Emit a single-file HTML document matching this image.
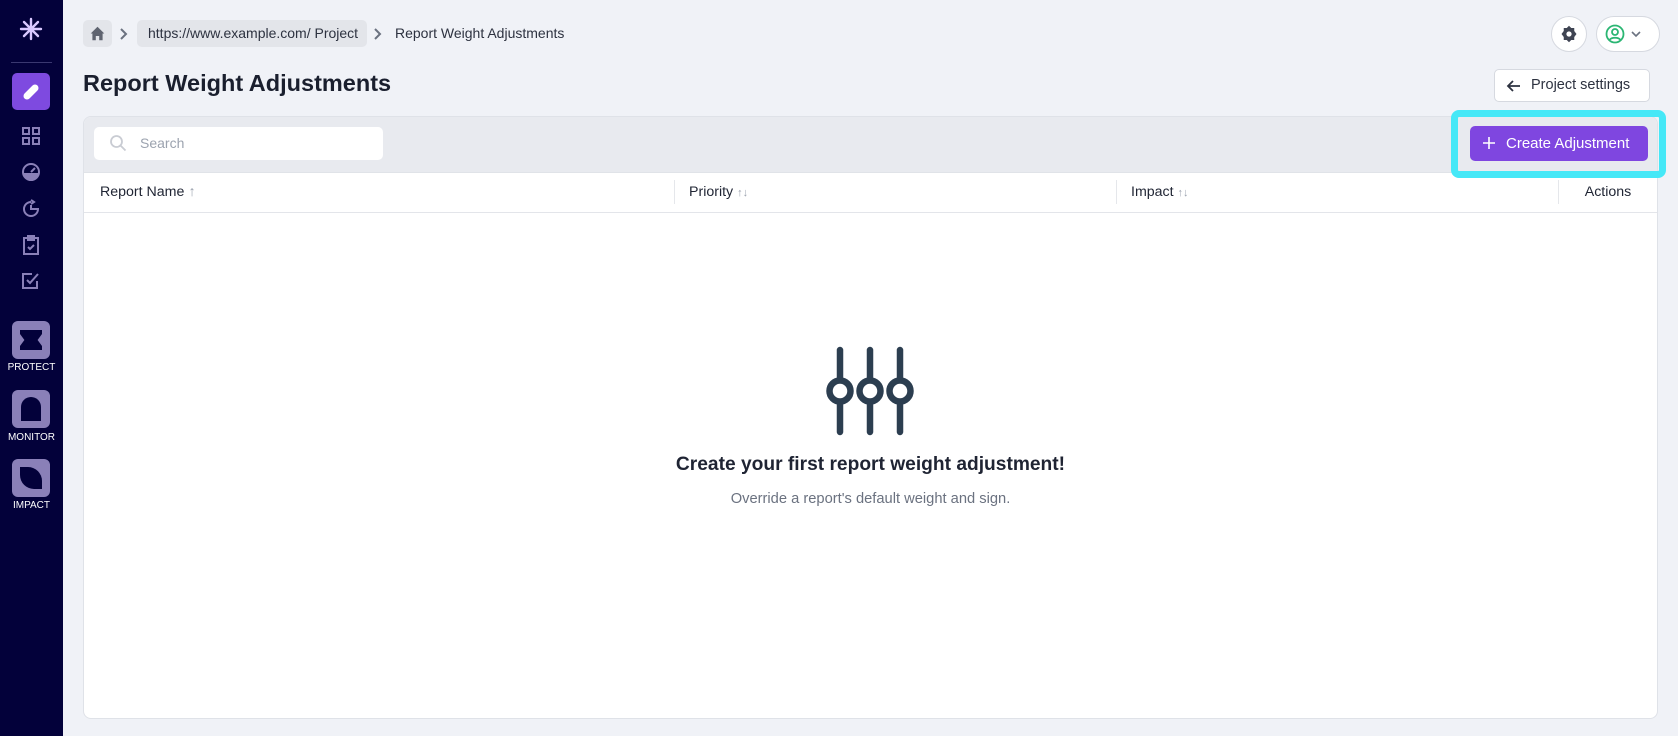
<!DOCTYPE html>
<html><head><meta charset="utf-8"><style>
*{box-sizing:border-box;margin:0;padding:0}
body{width:1678px;height:736px;background:#f0f2f7;font-family:"Liberation Sans",sans-serif;position:relative;overflow:hidden;color:#1f2433}
.abs{position:absolute}
.sb{left:0;top:0;width:63px;height:736px;background:#03013a}
.tile{left:12px;width:38px;height:38px;border-radius:6px;background:#8a80b8}
.lbl{left:0;width:63px;text-align:center;color:#fff;font-size:10px}
.hd{font-size:14.2px;color:#1f2433;top:172px;height:40px;line-height:40px}
.div{top:180px;width:1px;height:24px;background:#e5e7eb}
</style></head><body>
<div class="abs sb"></div>
<svg class="abs" style="left:19px;top:17px" width="24" height="24" viewBox="0 0 24 24" stroke="#d9c8ff" stroke-width="2.4" stroke-linecap="round"><path d="M12 2v20M2 12h20M5 5l14 14M19 5L5 19"/></svg>
<div class="abs" style="left:11px;top:62px;width:41px;height:1px;background:#3a3870"></div>
<div class="abs" style="left:12px;top:73px;width:38px;height:37px;border-radius:5px;background:#7e4ae0"></div>
<svg class="abs" style="left:19px;top:80px" width="24" height="24" viewBox="0 0 24 24"><path d="M8 16L16 8" stroke="#fff" stroke-width="7" stroke-linecap="round"/></svg>
<svg class="abs" style="left:21px;top:126px" width="20" height="20" viewBox="0 0 20 20" fill="none" stroke="#8a80b8" stroke-width="2"><rect x="2" y="2" width="6" height="6"/><rect x="12" y="2" width="6" height="6"/><rect x="2" y="12" width="6" height="6"/><rect x="12" y="12" width="6" height="6"/></svg>
<svg class="abs" style="left:21px;top:162px" width="20" height="20" viewBox="0 0 20 20"><circle cx="10" cy="10" r="8" fill="none" stroke="#8a80b8" stroke-width="2"/><path d="M2 11h16a8 8 0 0 1-16 0z" fill="#8a80b8"/><path d="M10 10l4-4" stroke="#8a80b8" stroke-width="2"/></svg>
<svg class="abs" style="left:21px;top:199px" width="20" height="20" viewBox="0 0 20 20" fill="none" stroke="#8a80b8" stroke-width="2"><path d="M10 3a7 7 0 1 0 7 7h-7V6"/><path d="M10 1l3 2-3 2"/></svg>
<svg class="abs" style="left:21px;top:235px" width="20" height="20" viewBox="0 0 20 20" fill="none" stroke="#8a80b8" stroke-width="2"><rect x="3" y="3" width="14" height="16"/><rect x="7" y="1" width="6" height="4" fill="#8a80b8"/><path d="M7 12l2 2 4-4"/></svg>
<svg class="abs" style="left:21px;top:270px" width="20" height="20" viewBox="0 0 20 20" fill="none" stroke="#8a80b8" stroke-width="2"><path d="M16 11v7H2V4h9"/><path d="M6 10l3 3 8-9"/></svg>
<div class="abs tile" style="top:321px"></div><div class="abs" style="left:20px;top:330px;width:22px;height:20px;background:#03013a;clip-path:polygon(0 0,100% 0,100% 20%,80% 50%,100% 80%,100% 100%,0 100%,0 80%,20% 50%,0 20%)"></div>
<div class="abs lbl" style="top:362px">PROTECT</div>
<div class="abs tile" style="top:390px"></div><div class="abs" style="left:21px;top:397px;width:20px;height:24px;background:#03013a;border-radius:10px 10px 0 0"></div>
<div class="abs lbl" style="top:432px">MONITOR</div>
<div class="abs tile" style="top:459px"></div><div class="abs" style="left:20px;top:467px;width:22px;height:22px;background:#03013a;border-radius:0 14px 0 14px"></div>
<div class="abs lbl" style="top:500px">IMPACT</div>

<div class="abs" style="left:83px;top:20px;width:29px;height:27px;border-radius:5px;background:#e3e5ea"></div>
<svg class="abs" style="left:89px;top:25px" width="17" height="17" viewBox="0 0 20 20"><path d="M10 2L2 10h2v8h4v-5h4v5h4v-8h2z" fill="#5f6470"/></svg>
<svg class="abs" style="left:118px;top:27px" width="12" height="14" viewBox="0 0 12 14" fill="none" stroke="#6b7280" stroke-width="2"><path d="M3 2l5 5-5 5"/></svg>
<div class="abs" style="left:137px;top:20px;width:230px;height:27px;border-radius:5px;background:#e3e5ea;font-size:14px;line-height:27px;padding-left:11px;color:#2d3240">https://www.example.com/ Project</div>
<svg class="abs" style="left:372px;top:27px" width="12" height="14" viewBox="0 0 12 14" fill="none" stroke="#6b7280" stroke-width="2"><path d="M3 2l5 5-5 5"/></svg>
<div class="abs" style="left:395px;top:20px;line-height:27px;font-size:14px;color:#2d3240">Report Weight Adjustments</div>
<div class="abs" style="left:83px;top:70px;font-size:23.5px;font-weight:bold;color:#1a1f2e">Report Weight Adjustments</div>

<div class="abs" style="left:1551px;top:16px;width:36px;height:36px;border-radius:50%;background:#fff;border:1px solid #d6d9e0"></div>
<svg class="abs" style="left:1560px;top:25px" width="18" height="18" viewBox="0 0 24 24"><path d="M12 1l3 3h4v4l3 4-3 4v4h-4l-3 3-3-3H5v-4l-3-4 3-4V4h4z" fill="#3f4452"/><circle cx="12" cy="12" r="3.5" fill="#fff"/></svg>
<div class="abs" style="left:1596px;top:16px;width:64px;height:36px;border-radius:18px;background:#fff;border:1px solid #d6d9e0"></div>
<svg class="abs" style="left:1605px;top:24px" width="20" height="20" viewBox="0 0 20 20" fill="none" stroke="#2bb673" stroke-width="1.8"><circle cx="10" cy="10" r="8.5"/><circle cx="10" cy="8" r="3"/><path d="M4.5 16c2-3 9-3 11 0"/></svg>
<svg class="abs" style="left:1630px;top:28px" width="12" height="12" viewBox="0 0 12 12" fill="none" stroke="#6b7280" stroke-width="1.6"><path d="M2 4l4 4 4-4"/></svg>

<div class="abs" style="left:1494px;top:69px;width:156px;height:33px;border-radius:5px;background:#fff;border:1px solid #d6d9e0;font-size:14.5px;line-height:31px;padding-left:36px;color:#2d3240">Project settings</div>
<svg class="abs" style="left:1506px;top:78px" width="16" height="16" viewBox="0 0 16 16" fill="none" stroke="#2d3240" stroke-width="1.8"><path d="M14 8H2M7 3L2 8l5 5"/></svg>

<div class="abs" style="left:83px;top:116px;width:1575px;height:603px;border-radius:8px;background:#fff;border:1px solid #dfe2e8;overflow:hidden">
<div style="height:56px;background:#e8eaef;border-bottom:1px solid #e0e3e8"></div>
<div style="height:40px;border-bottom:1px solid #e3e5ea"></div>
</div>
<div class="abs" style="left:94px;top:127px;width:289px;height:33px;border-radius:5px;background:#fff;font-size:14px;line-height:33px;padding-left:46px;color:#9ca3af">Search</div>
<svg class="abs" style="left:109px;top:134px" width="18" height="18" viewBox="0 0 18 18" fill="none" stroke="#c9ccd3" stroke-width="1.8"><circle cx="7.5" cy="7.5" r="5.5"/><path d="M11.5 11.5l5 5"/></svg>
<div class="abs" style="left:1451px;top:110px;width:215px;height:68px;border:7px solid #45e8f7;border-radius:8px"></div>
<div class="abs" style="left:1470px;top:126px;width:178px;height:35px;border-radius:5px;background:#7f46e0;color:#fff;font-size:15px;line-height:35px;padding-left:36px">Create Adjustment</div>
<svg class="abs" style="left:1482px;top:136px" width="14" height="14" viewBox="0 0 14 14" stroke="#fff" stroke-width="1.6"><path d="M7 1v12M1 7h12"/></svg>

<div class="abs hd" style="left:100px">Report Name <span style="color:#9ca3af">↑</span></div>
<div class="abs div" style="left:674px"></div>
<div class="abs hd" style="left:689px">Priority <span style="color:#9ca3af;font-size:11px">↑↓</span></div>
<div class="abs div" style="left:1116px"></div>
<div class="abs hd" style="left:1131px">Impact <span style="color:#9ca3af;font-size:11px">↑↓</span></div>
<div class="abs div" style="left:1558px"></div>
<div class="abs hd" style="left:1558px;width:100px;text-align:center">Actions</div>

<svg class="abs" style="left:820px;top:345px" width="100" height="95" viewBox="820 345 100 95" stroke="#2c3e50" stroke-width="6.5" stroke-linecap="round" fill="none">
<path d="M840 350v28M840 404v28M870 350v28M870 404v28M900 350v28M900 404v28"/>
<circle cx="840" cy="391" r="10.5"/><circle cx="870" cy="391" r="10.5"/><circle cx="900" cy="391" r="10.5"/></svg>
<div class="abs" style="left:0;width:1741px;top:454px;text-align:center;font-size:19.2px;font-weight:bold;color:#1f2433">Create your first report weight adjustment!</div>
<div class="abs" style="left:0;width:1741px;top:491px;text-align:center;font-size:14.7px;color:#6b7280">Override a report's default weight and sign.</div>
</body></html>
